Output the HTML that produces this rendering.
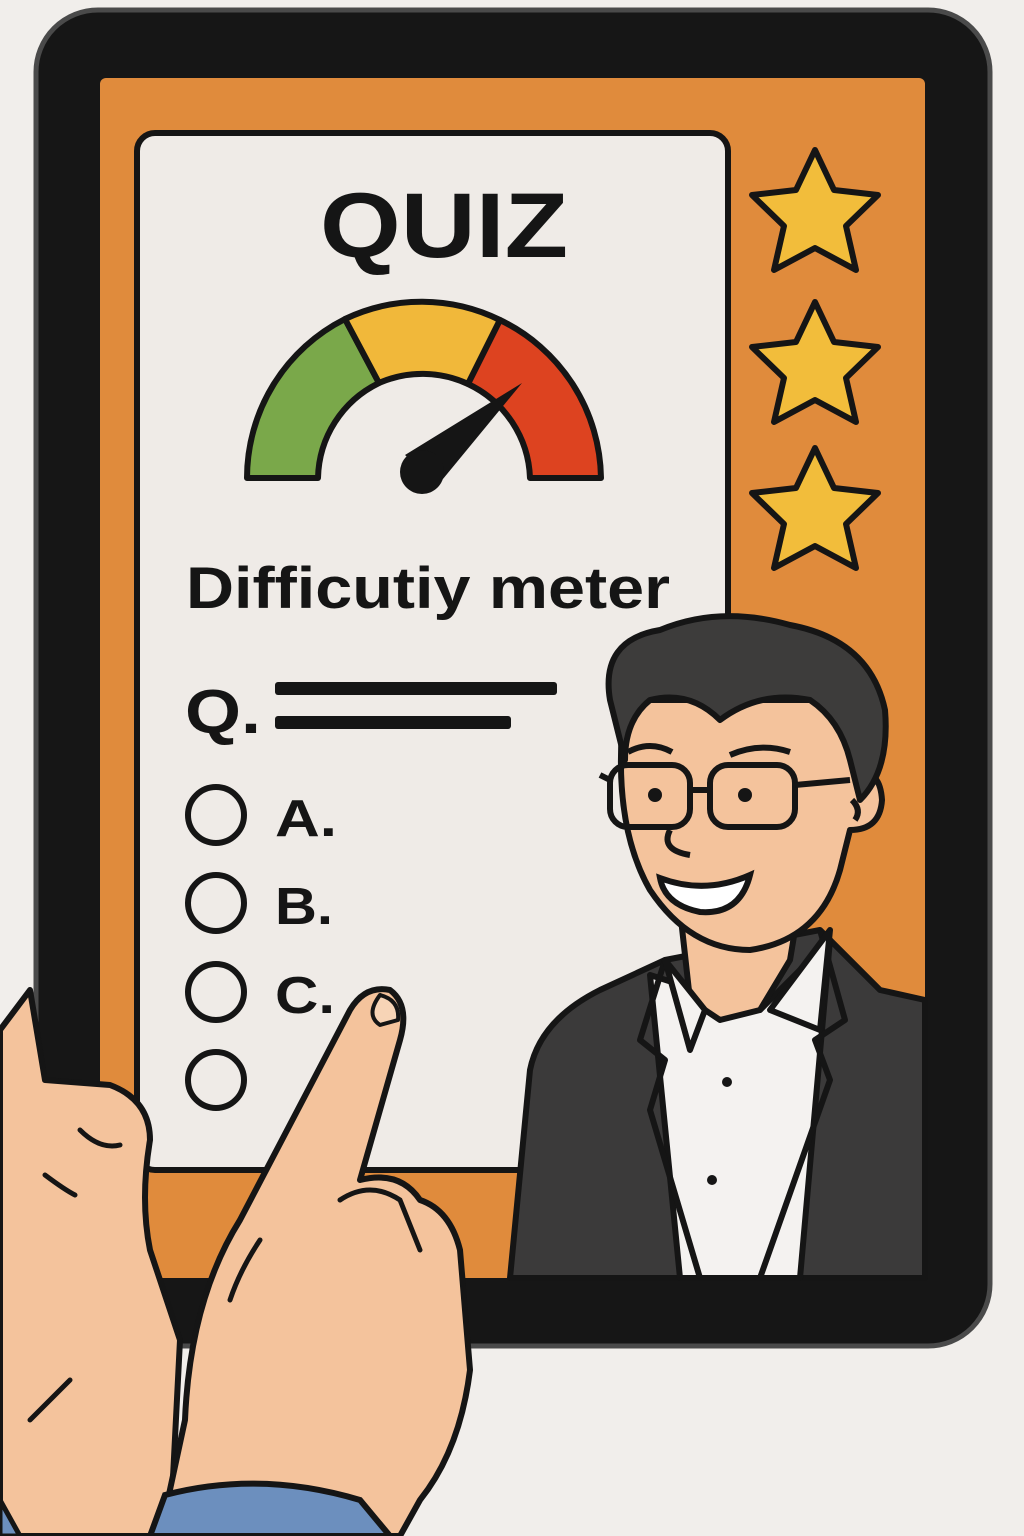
<!DOCTYPE html>
<html><head><meta charset="utf-8"><style>
html,body{margin:0;padding:0;background:#f1eeeb;}
svg{display:block}
text{font-family:"Liberation Sans",sans-serif;font-weight:bold;fill:#151515}
</style></head><body>
<svg width="1024" height="1536" viewBox="0 0 1024 1536" xmlns="http://www.w3.org/2000/svg">
<rect width="1024" height="1536" fill="#f1eeeb"/>
<rect x="36" y="10" width="954" height="1336" rx="62" fill="#161616" stroke="#4a4a4a" stroke-width="5"/>
<rect x="100" y="78" width="825" height="1200" rx="6" fill="#e08b3c"/>
<rect x="137" y="133" width="591" height="1037" rx="18" fill="#efebe7" stroke="#151515" stroke-width="6"/>
<text x="320" y="257" font-size="92" textLength="248" lengthAdjust="spacingAndGlyphs">QUIZ</text>
<g stroke="#151515" stroke-width="6" stroke-linejoin="round">
<path d="M247 478 A178 178 0 0 1 345 319 L379 383 A108 108 0 0 0 318 478 Z" fill="#7aa84a"/>
<path d="M345 319 A178 178 0 0 1 500 320 L468 384 A108 108 0 0 0 379 383 Z" fill="#f1b83a"/>
<path d="M500 320 A178 178 0 0 1 601 478 L530 478 A108 108 0 0 0 468 384 Z" fill="#dd4320"/>
</g>
<path d="M405 455 L522 383 L438 485 Z" fill="#151515"/>
<circle cx="422" cy="472" r="22" fill="#151515"/>
<text x="186" y="608" font-size="58" textLength="484" lengthAdjust="spacingAndGlyphs">Difficutiy meter</text>
<text x="185" y="733" font-size="62" textLength="76" lengthAdjust="spacingAndGlyphs">Q.</text>
<rect x="275" y="682" width="282" height="13" rx="3" fill="#151515"/>
<rect x="275" y="716" width="236" height="13" rx="3" fill="#151515"/>
<g fill="none" stroke="#151515" stroke-width="6">
<circle cx="216" cy="815" r="28"/><circle cx="216" cy="903" r="28"/>
<circle cx="216" cy="992" r="28"/><circle cx="216" cy="1080" r="28"/>
</g>
<text x="275" y="836" font-size="52" textLength="62" lengthAdjust="spacingAndGlyphs">A.</text>
<text x="275" y="924" font-size="52" textLength="58" lengthAdjust="spacingAndGlyphs">B.</text>
<text x="275" y="1013" font-size="52" textLength="60" lengthAdjust="spacingAndGlyphs">C.</text>
<g fill="#f2bd3b" stroke="#151515" stroke-width="6" stroke-linejoin="round">
<path d="M815 150 L834 190 L878 195 L846 226 L856 270 L815 248 L774 270 L784 226 L752 195 L796 190 Z"/>
<path d="M815 302 L834 342 L878 347 L846 378 L856 422 L815 400 L774 422 L784 378 L752 347 L796 342 Z"/>
<path d="M815 448 L834 488 L878 493 L846 524 L856 568 L815 546 L774 568 L784 524 L752 493 L796 488 Z"/>
</g>
<g stroke="#151515" stroke-width="6" stroke-linejoin="round">
<path d="M510 1278 L530 1070 Q540 1020 600 990 L665 960 L820 930 L880 990 L925 1000 L925 1278 Z" fill="#3b3a3a"/>
<path d="M650 975 L680 1278 L800 1278 L830 940 L760 1010 Z" fill="#f4f2f0"/>
<path d="M665 960 L640 1040 L665 1060 L650 1110 L700 1278 M820 930 L845 1020 L815 1040 L830 1080 L760 1278" fill="none"/>
<path d="M680 910 L690 1000 L720 1020 L760 1010 L790 960 L800 900 Z" fill="#f4c39c"/>
<path d="M665 960 L705 1010 L690 1050 Z M830 930 L770 1010 L820 1030 Z" fill="#f4f2f0"/>
<path d="M625 700 Q610 820 650 890 Q690 950 750 950 Q820 940 840 870 L850 830 Q880 830 882 800 Q880 770 860 775 L855 700 Z" fill="#f4c39c"/>
<path d="M610 700 Q600 640 660 630 Q720 605 790 625 Q870 640 885 710 Q890 770 860 800 L850 760 Q840 720 810 700 Q760 690 720 720 Q690 690 650 700 Q625 720 625 760 Z" fill="#3d3c3b"/>
</g>
<g fill="none" stroke="#151515" stroke-width="6">
<rect x="610" y="765" width="80" height="62" rx="18"/>
<rect x="710" y="765" width="85" height="62" rx="18"/>
<path d="M690 790 L710 790 M610 780 L600 775 M795 785 L850 780"/>
<path d="M628 752 Q650 740 672 752 M730 755 Q760 742 790 752"/>
<path d="M670 830 Q660 850 690 855"/>
<path d="M852 800 Q862 810 855 820"/>
</g>
<circle cx="655" cy="795" r="7" fill="#151515"/><circle cx="745" cy="795" r="7" fill="#151515"/>
<path d="M660 878 Q705 895 750 875 Q740 915 700 912 Q665 905 660 878 Z" fill="#fff" stroke="#151515" stroke-width="6"/>
<circle cx="727" cy="1082" r="5" fill="#151515"/><circle cx="712" cy="1180" r="5" fill="#151515"/>
<g stroke="#151515" stroke-width="6" stroke-linejoin="round" stroke-linecap="round" fill="#f4c39c">
<path d="M0 1030 L30 990 L45 1080 L110 1085 Q150 1100 150 1140 Q140 1200 150 1250 L180 1340 L170 1536 L0 1536 Z"/>
<path d="M160 1536 L185 1420 Q190 1300 240 1220 L350 1010 Q365 985 390 990 Q410 1005 400 1040 L360 1180 Q400 1170 420 1200 Q450 1210 460 1250 L470 1370 Q460 1450 420 1500 L400 1536 Z"/>
<path d="M380 995 Q400 1000 398 1020 L380 1025 Q365 1015 380 995 Z" fill="#f7d4b6" stroke-width="4"/>
</g>
<g fill="none" stroke="#151515" stroke-width="5" stroke-linecap="round">
<path d="M80 1130 Q100 1150 120 1145 M45 1175 Q65 1190 75 1195 M30 1420 Q60 1390 70 1380"/>
<path d="M340 1200 Q370 1180 400 1200 L420 1250 M230 1300 Q240 1270 260 1240"/>
</g>
<path d="M150 1536 L165 1495 Q260 1470 360 1500 L390 1536 Z" fill="#6c8fbe" stroke="#151515" stroke-width="6"/>
<path d="M0 1500 L20 1536 L0 1536 Z" fill="#6c8fbe" stroke="#151515" stroke-width="5"/>
</svg>
</body></html>
